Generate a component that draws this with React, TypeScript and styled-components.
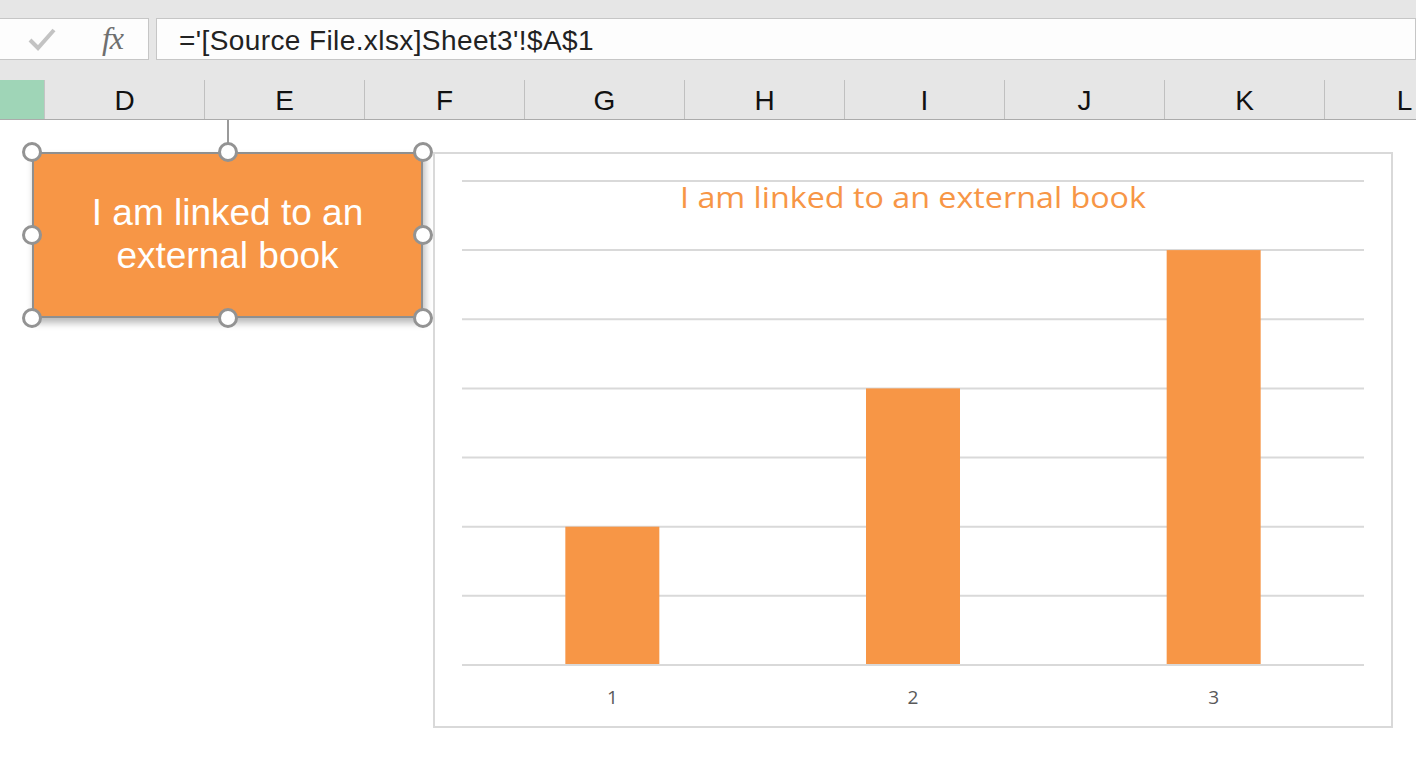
import React from 'react';
import styled, { createGlobalStyle } from 'styled-components';

const GlobalStyle = createGlobalStyle`
  html, body {
    margin: 0;
    padding: 0;
    background: #fff;
    overflow: hidden;
  }
  body {
    font-family: "Liberation Sans", Arial, sans-serif;
  }
`

const ORANGE = '#f79646';
const GRID = '#d9d9d9';

const Page = styled.div`
  width: 1416px;
  height: 764px;
  display: flex;
  flex-direction: column;
  background: #e6e6e6;
  overflow: hidden;
`

const TopStrip = styled.div`
  height: 18px;
  flex: none;
`

const FormulaRow = styled.div`
  height: 42px;
  flex: none;
  display: flex;
  gap: 7px;
`

const FormulaBox = styled.div<{ $width?: number }>`
  box-sizing: border-box;
  height: 42px;
  background: #fdfdfd;
  border: 1px solid #c6c6c6;
  display: flex;
  align-items: center;
  ${({ $width }) => ($width ? `width: ${$width}px; flex: none;` : 'flex: 1;')}
`

const ButtonsBox = styled(FormulaBox)`
  border-left: none;
  justify-content: space-between;
  padding: 0 25px 0 28px;
`

const FxGlyph = styled.span`
  font-family: "Liberation Serif", "Times New Roman", serif;
  font-style: italic;
  font-size: 32px;
  color: #6f6f6f;
  letter-spacing: -1px;
  margin-top: -2px;
`

const FormulaText = styled.span`
  padding-left: 22px;
  padding-top: 3px;
  font-size: 28px;
  color: #222;
  white-space: nowrap;
  letter-spacing: 0.4px;
`

const Spacer = styled.div`
  height: 20px;
  flex: none;
`

const HeaderRow = styled.div`
  height: 40px;
  flex: none;
  display: flex;
  box-sizing: border-box;
  border-bottom: 1px solid #ababab;
  background: #e6e6e6;
`

const CornerCell = styled.div`
  width: 45px;
  flex: none;
  background: #9fd5b7;
  border-right: 1px solid #c4c4c4;
  box-sizing: border-box;
`

const HeaderCell = styled.div`
  width: 160px;
  flex: none;
  box-sizing: border-box;
  border-right: 1px solid #c0c0c0;
  display: flex;
  align-items: center;
  justify-content: center;
  font-size: 28px;
  color: #111;
  padding-top: 2px;
`

const Sheet = styled.div`
  flex: 1;
  position: relative;
  background: #fff;
`

const RotateStem = styled.div`
  position: absolute;
  left: 227px;
  top: 0;
  width: 2px;
  height: 26px;
  background: #9a9a9a;
`

const Shape = styled.div`
  position: absolute;
  left: 32px;
  top: 32px;
  width: 391px;
  height: 166px;
  box-sizing: border-box;
  background: ${ORANGE};
  border: 2px solid #8f8f8f;
  box-shadow: 2px 5px 7px rgba(0, 0, 0, 0.28);
  display: flex;
  align-items: center;
  justify-content: center;
  text-align: center;
  color: #fff;
  font-size: 37px;
  line-height: 43px;
  padding-bottom: 2px;
`

const Handle = styled.span<{ $x: number; $y: number }>`
  position: absolute;
  left: ${({ $x }) => $x}px;
  top: ${({ $y }) => $y}px;
  width: 14px;
  height: 14px;
  margin: -10px 0 0 -10px;
  border-radius: 50%;
  background: #fff;
  border: 3px solid #939393;
`

const ChartFrame = styled.div`
  position: absolute;
  left: 433px;
  top: 32px;
  width: 960px;
  height: 576px;
  box-sizing: border-box;
  border: 2px solid ${GRID};
  background: #fff;
`

const ChartSvg = styled.svg`
  display: block;
  position: absolute;
  left: -2px;
  top: -2px;
`

const columns = ['D', 'E', 'F', 'G', 'H', 'I', 'J', 'K', 'L'];

const handles = [
  [32, 32], [228, 32], [423, 32],
  [32, 115], [423, 115],
  [32, 198], [228, 198], [423, 198],
];

const values = [2, 4, 6];

const BarChart: React.FC = () => {
  const left = 29;
  const right = 931;
  const base = 513;
  const step = 69.15;
  const slot = (right - left) / values.length;

  return (
    <ChartFrame>
      <ChartSvg width={960} height={576} viewBox="0 0 960 576">
        {Array.from({ length: 8 }, (_, i) => (
          <line
            key={i}
            x1={left}
            x2={right}
            y1={base - i * step}
            y2={base - i * step}
            stroke={GRID}
            strokeWidth={2}
          />
        ))}
        <text
          x={480}
          y={56}
          textAnchor="middle"
          fill={ORANGE}
          fontFamily='"Open Sans", "Noto Sans", sans-serif'
          fontSize={29}
          textLength={466}
          lengthAdjust="spacingAndGlyphs"
        >
          I am linked to an external book
        </text>
        {values.map((v, i) => {
          const cx = left + slot * (i + 0.5);
          return (
            <g key={i}>
              <rect x={cx - 47} y={base - v * step} width={94} height={v * step - 1} fill={ORANGE} />
              <text
                x={cx}
                y={552}
                textAnchor="middle"
                fill="#595959"
                fontFamily='"Open Sans", "Noto Sans", sans-serif'
                fontSize={19}
              >
                {i + 1}
              </text>
            </g>
          );
        })}
      </ChartSvg>
    </ChartFrame>
  );
};

export default function App() {
  return (
    <Page>
      <GlobalStyle />
      <TopStrip />
      <FormulaRow>
        <ButtonsBox $width={149}>
          <svg width="28" height="24" viewBox="0 0 28 24">
            <path d="M2 13 L10 21 L26 3" fill="none" stroke="#c3c3c3" strokeWidth="4" />
          </svg>
          <FxGlyph>fx</FxGlyph>
        </ButtonsBox>
        <FormulaBox>
          <FormulaText>='[Source File.xlsx]Sheet3'!$A$1</FormulaText>
        </FormulaBox>
      </FormulaRow>
      <Spacer />
      <HeaderRow>
        <CornerCell />
        {columns.map((c) => (
          <HeaderCell key={c}>{c}</HeaderCell>
        ))}
      </HeaderRow>
      <Sheet>
        <RotateStem />
        <Shape>
          I am linked to an
          <br />
          external book
        </Shape>
        {handles.map(([x, y], i) => (
          <Handle key={i} $x={x} $y={y} />
        ))}
        <BarChart />
      </Sheet>
    </Page>
  );
}
